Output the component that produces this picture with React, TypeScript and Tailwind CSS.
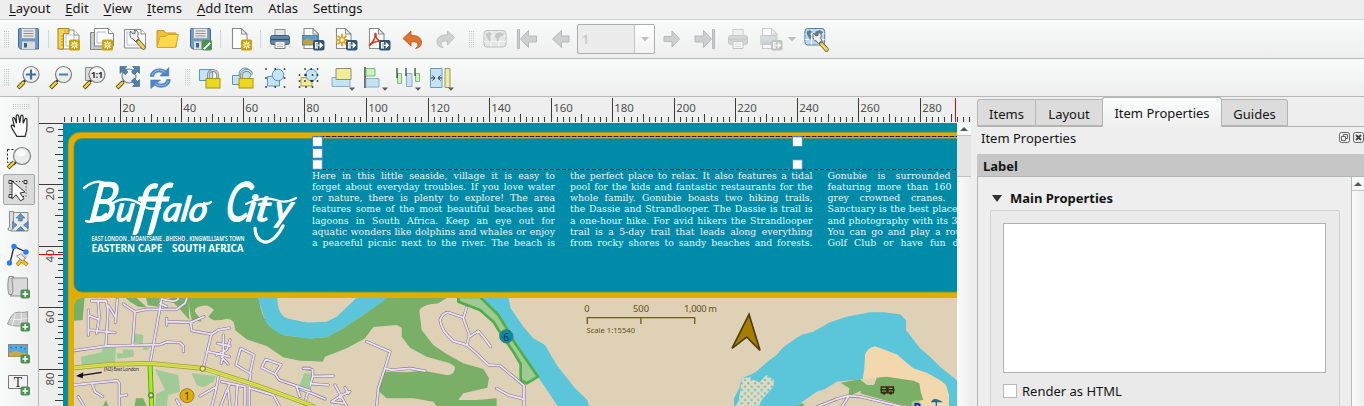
import type { ReactNode } from "react";

const UI = "font-['Noto_Sans',sans-serif]";

/* ---------- shared pieces ---------- */

function Icon({ children, size = 24 }: { children: ReactNode; size?: number }) {
  return (
    <svg width={size} height={size} viewBox={`0 0 ${size} ${size}`} className="block shrink-0 overflow-visible">
      {children}
    </svg>
  );
}

function Cell({ children, w = "w-[33px]" }: { children?: ReactNode; w?: string }) {
  return <div className={`${w} flex h-full shrink-0 items-center justify-center`}>{children}</div>;
}

function Sep({ w = "w-[7px]" }: { w?: string }) {
  return (
    <div className={`${w} flex h-full shrink-0 items-center justify-center`}>
      <div className="h-[18px] w-px bg-[#d6d6d6]" />
    </div>
  );
}

function Grip({ w = "w-[12px]", horizontal = false }: { w?: string; horizontal?: boolean }) {
  const dots: ReactNode[] = [];
  for (let i = 0; i < 3; i++) {
    for (let j = 0; j < 8; j++) {
      const a = i * 2;
      const b = j * 2.2;
      dots.push(
        <rect key={`${i}-${j}`} x={horizontal ? b : a} y={horizontal ? a : b} width="1" height="1" fill="#c2c5c5" />
      );
    }
  }
  return (
    <div className={`${w} flex shrink-0 items-center justify-center`}>
      <svg width={horizontal ? 17 : 5} height={horizontal ? 5 : 17} className="block">
        {dots}
      </svg>
    </div>
  );
}

/* ---------- icon parts ---------- */

const Star = () => (
  <g>
    <rect x="12" y="12.500" width="11" height="11" rx="1.500" fill="#c8a30c" />
    <path d="M17.5 14v8M13.500 18h8M14.700 15.200l5.600 5.600M20.300 15.200l-5.600 5.600" stroke="#fff" strokeWidth="1.200" />
    <circle cx="17.500" cy="18" r="1.500" fill="#e6c843" />
  </g>
);
const ExportBadge = ({ c = "#36566f" }: { c?: string }) => (
  <g>
    <rect x="12" y="13" width="11.500" height="10.500" rx="2" fill={c} />
    <path d="M17 15.500h-2.500v5.500H17M16.500 18.200h4.500M19.200 16v4.500l2.300-2.300z" stroke="#fff" strokeWidth="1.100" fill="#fff" fillOpacity=".6" />
  </g>
);
const PlusBadge = () => (
  <g>
    <rect x="13.500" y="14.500" width="9.500" height="9" rx="1.800" fill="#4f9154" />
    <path d="M18.200 16.200v5.600M15.500 19h5.600" stroke="#fff" strokeWidth="1.700" />
  </g>
);
const Page = () => <path d="M3.500 1.500h9l5.500 5.500v14.500H3.500zM12.500 1.500V7H18" fill="#fff" stroke="#8a8a88" strokeWidth="1.100" />;
const Floppy = () => (
  <g>
    <path d="M1.500 2.500a1 1 0 011-1h18a1 1 0 011 1V22h-18l-2-2z" fill="#6f9bc4" stroke="#44698e" />
    <rect x="4.500" y="1.500" width="14" height="10" fill="#e9e9e9" stroke="#8798a8" strokeWidth=".7" />
    <path d="M6.500 4h10M6.500 6.500h10M6.500 9h10" stroke="#8d8d8d" />
    <rect x="5" y="14.500" width="13" height="7.500" fill="#dcdcdc" />
    <rect x="7" y="16" width="3" height="4.500" fill="#3f6386" />
  </g>
);
const Lens = ({ x = 14, y = 8.500, r = 8 }: { x?: number; y?: number; r?: number }) => (
  <g>
    <path d={`M${x - r * 0.7} ${y + r * 0.7}L${x - r * 0.7 - 2.500} ${y + r * 0.7 + 2.500}`} stroke="#333" strokeWidth="2.500" />
    <path d="M7 16L1 22" stroke="#5c4a10" strokeWidth="4" />
    <path d="M7 16L1.500 21.500" stroke="#f2d638" strokeWidth="2.400" />
    <circle cx={x} cy={y} r={r} fill="#e9ebeb" fillOpacity=".92" stroke="#7e8080" strokeWidth="1.200" />
    <ellipse cx={x - 1} cy={y - 3} rx={r * 0.6} ry={r * 0.4} fill="#fff" opacity=".7" />
  </g>
);
const Caret = ({ x = 20, y = 21.500 }: { x?: number; y?: number }) => <path d={`M${x - 3} ${y}h6l-3 3.200z`} fill="#5a5a5a" />;
const Wrench = () => (
  <g>
    <path d="M13 12l7.500 8.500" stroke="#6d6540" strokeWidth="4.600" strokeLinecap="round" />
    <path d="M15.500 15l5 5.500" stroke="#f0d55a" strokeWidth="2.800" strokeLinecap="round" />
    <path d="M7 6.500c0-1 .2-1.700.8-2.300L10 7l2-.7.2-2.300-1-1c4 .4 4.800 4 3.300 6.200L16 11.500l-3.500 3-2.300-2.500C8 12 6.800 9.500 7 6.500z" fill="#f2f2f2" stroke="#646464" />
  </g>
);
const Printer = ({ off = false }: { off?: boolean }) => (
  <g opacity={off ? 0.4 : 1}>
    <rect x="7" y="2.500" width="10" height="8" fill="#e8e8e8" stroke="#8b8f92" />
    <rect x="2.500" y="8.500" width="19" height="9" rx="2" fill={off ? "#a6a9aa" : "#5f88aa"} stroke={off ? "#888" : "#3d5e7c"} />
    <path d="M3 12.500h18" stroke={off ? "#888" : "#39536a"} strokeWidth="1.400" />
    <path d="M7 14.500h10v7H7z" fill="#fff" stroke="#7d8082" />
    <path d="M9 17h6M9 19.500h6" stroke="#aaa" />
  </g>
);
const Picture = () => (
  <g>
    <rect x="2" y="8.500" width="15.500" height="9.500" fill="#4da3d8" stroke="#5b6e74" strokeWidth=".8" />
    <path d="M2.500 17.500v-4l5-2.500 4 3 3-2 2.500 1.500v4z" fill="#c3a23a" />
  </g>
);
const MapTile = ({ off = false }: { off?: boolean }) => (
  <g opacity={off ? 0.55 : 1}>
    <rect x="1" y="3.500" width="22" height="16.500" rx="3" fill={off ? "#dadddd" : "#b9d8ee"} stroke={off ? "#8f8f8f" : "#54788f"} />
    <path d="M1 9h22M1 14.500h22M8 4v16M16 4v16" stroke="#fff" strokeWidth=".9" />
    <path d="M3 6.500l4-1.500 2 2-2 2 1 2.500-1 4-2-3.500-2-3zM13 6.500l4-1.500 4 2-2 3-2-1-1 4-2 2-.5-3.500-2-2z" fill={off ? "#a0a0a0" : "#56809d"} />
  </g>
);
const Dots = ({ x, y, w, h }: { x: number; y: number; w: number; h: number }) => (
  <path
    d={`M${x} ${y}h.01M${x + w / 2} ${y}h.01M${x + w} ${y}h.01M${x} ${y + h / 2}h.01M${x + w} ${y + h / 2}h.01M${x} ${y + h}h.01M${x + w / 2} ${y + h}h.01M${x + w} ${y + h}h.01`}
    stroke="#111"
    strokeWidth="1.500"
    strokeLinecap="square"
  />
);
const Lock = ({ open = false }: { open?: boolean }) => (
  <g>
    <path d={open ? "M10.500 12V9c0-6 10-6 10-.5" : "M10.500 13V9c0-6 9-6 9 0v4"} fill="none" stroke="#858888" strokeWidth="3" />
    <path d={open ? "M10.500 12V9c0-6 10-6 10-.5" : "M10.500 13V9c0-6 9-6 9 0v4"} fill="none" stroke="#d5d7d7" strokeWidth="1.200" />
    <rect x="8" y="12.500" width="14" height="9.500" fill="#edd81f" stroke="#aa9210" />
  </g>
);

/* ---------- toolbars ---------- */

function MainToolbar() {
  return (
    <div className="flex h-[39px] shrink-0 items-center border-b border-[#b7b8b8] bg-linear-to-b from-[#f9fbfb] to-[#eeeeee]">
      <Grip />
      <Cell><Icon><Floppy /></Icon></Cell>
      <Sep />
      <Cell>
        <Icon>
          <path d="M3 3h14l5 5v14H3z" fill="#fff" stroke="#8a8a88" />
          <path d="M17 3v5h5" fill="#fff" stroke="#8a8a88" />
          <rect x="9" y="8" width="8" height="11" fill="none" stroke="#a9bfe4" />
          <path d="M1 1.500h11v5H6.500V22H1z" fill="#f3d550" stroke="#a2851f" />
          <path d="M4 9h2M4 12h2M4 15h2M4 18h2M8 3v2M11 3v2" stroke="#a2851f" strokeWidth=".8" />
          <Star />
        </Icon>
      </Cell>
      <Cell>
        <Icon>
          <path d="M.5 5.500h16v17H.5z" fill="#c9c9c9" stroke="#858585" />
          <path d="M4.500 1.500h14l5 5V19h-19z" fill="#fff" stroke="#858585" />
          <path d="M18.500 1.500v5h5" fill="#fff" stroke="#858585" />
          <path d="M7 5h9M7 5v11h12" fill="none" stroke="#a9bfe4" />
          <Star />
        </Icon>
      </Cell>
      <Cell>
        <Icon>
          <path d="M1.500 2.500H18l4.500 4.500v14h-21z" fill="#fff" stroke="#8a8a88" />
          <path d="M18 2.500V7h4.500" fill="#fff" stroke="#8a8a88" />
          <path d="M4 5h10M4 5v13h13" fill="none" stroke="#a9bfe4" />
          <Wrench />
        </Icon>
      </Cell>
      <Cell>
        <Icon>
          <path d="M1 3.500h7l1.500 2.500H20v14H1z" fill="#edc23a" stroke="#c7961c" />
          <path d="M1 20.500L4 9.500h6l2-2h10.500l-3 13z" fill="#fbd84e" stroke="#d6a827" />
        </Icon>
      </Cell>
      <Cell>
        <Icon>
          <Floppy />
          <rect x="12.500" y="13" width="10.500" height="10.500" rx="1.800" fill="#4f9154" />
          <path d="M14.500 21.500l6-6 1 1-6 6z" fill="#fff" stroke="#d6f0d4" />
        </Icon>
      </Cell>
      <Sep />
      <Cell w="w-[34px]"><Icon><Page /><Star /></Icon></Cell>
      <Sep w="w-[5px]" />
      <Cell><Icon><Printer /></Icon></Cell>
      <Cell><Icon><g transform="translate(-.5 0)"><Page /><Picture /></g><ExportBadge /></Icon></Cell>
      <Cell>
        <Icon>
          <g transform="translate(-1 0)">
            <Page />
            <path d="M9 7.500v11M3.800 13h10.500M5.300 9.300l7.400 7.400M12.700 9.300l-7.400 7.400" stroke="#eba21c" strokeWidth="2" strokeLinecap="round" />
            <circle cx="9" cy="13" r="1.800" fill="#fff" />
          </g>
          <ExportBadge />
        </Icon>
      </Cell>
      <Cell>
        <Icon>
          <g transform="translate(-1 0)">
            <Page />
            <path d="M3.500 18C7 15 9.500 10.500 9 7.500c-.2-1.500 1.500-1 1 0-.7 3 1.500 6 5 7-3-.4-8 .5-11 3.800z" fill="none" stroke="#d53b24" strokeWidth="1.500" />
          </g>
          <ExportBadge />
        </Icon>
      </Cell>
      <Cell>
        <Icon>
          <path d="M3 11.500L11 4v4.500c6.500-.6 10.500 2.500 10.500 7 0 3.500-2.500 5.500-6 6 2.300-1.500 3-3.200 2-5-1-1.500-3.300-2-6.500-1.700V19z" fill="#df7430" stroke="#b85719" strokeWidth=".8" />
        </Icon>
      </Cell>
      <Cell>
        <Icon>
          <path d="M21.500 10.500L14.500 4v4c-6.500-.5-10.500 2.500-10.500 6.500 0 3.500 2 5.500 6 6-2-1.800-2.500-3.500-1.500-5 1-1.300 3-1.700 6-1.500v4z" fill="#cfd2d1" stroke="#b4b7b6" strokeWidth=".8" />
        </Icon>
      </Cell>
      <Grip w="w-[17px] pl-1" />
      <Cell><Icon><MapTile off /></Icon></Cell>
      <Cell>
        <Icon><path d="M1.500 2.500h2v19h-2zM4.500 12l8-8.500v5.500h8v6h-8v5.500z" fill="#ccd0d1" stroke="#b5b9ba" /></Icon>
      </Cell>
      <Cell>
        <Icon><path d="M3.500 12l9-8.500v5.500H20v6h-7.500v5.500z" fill="#ccd0d1" stroke="#b5b9ba" /></Icon>
      </Cell>
      <div className="flex h-[30px] w-[78px] shrink-0 items-stretch overflow-hidden rounded-[2px] border border-[#adadad] bg-[#ececec]">
        <div className="flex flex-1 items-center pl-1 text-[13px] text-[#b9bcbd]">1</div>
        <div className="flex w-5 items-center justify-center border-l border-[#c2c2c2] bg-linear-to-b from-white to-[#f3f3f3]">
          <svg width="8" height="5"><path d="M0 0h8L4 4.500z" fill="#bdbfbf" /></svg>
        </div>
      </div>
      <Cell>
        <Icon><path d="M19.500 12l-7.500-8v5.500H4v5h8V20z" fill="#ccd0d1" stroke="#b5b9ba" /></Icon>
      </Cell>
      <Cell>
        <Icon><path d="M21.500 2.500h-2v19h2zM18.500 12l-8-8.500v5.500H2v6h8.500v5.500z" fill="#ccd0d1" stroke="#b5b9ba" /></Icon>
      </Cell>
      <Cell><Icon><Printer off /></Icon></Cell>
      <Cell>
        <Icon>
          <g opacity=".38">
            <Page />
            <rect x="2" y="8.500" width="15" height="9" fill="#a3bab9" stroke="#777" />
            <rect x="2" y="14" width="15" height="3.500" fill="#999" />
            <ExportBadge c="#777" />
          </g>
        </Icon>
      </Cell>
      <Cell w="w-[10px]"><svg width="8" height="5"><path d="M0 0h8L4 4.500z" fill="#bdbfbf" /></svg></Cell>
      <Cell w="w-[38px]">
        <Icon>
          <g transform="translate(0 -2) scale(.9 1)"><MapTile /></g>
          <g transform="translate(2 2)"><Wrench /></g>
        </Icon>
      </Cell>
    </div>
  );
}

function ViewToolbar() {
  return (
    <div className="flex h-[38px] shrink-0 items-center border-b border-[#b7b8b8] bg-linear-to-b from-[#f9fbfb] to-[#eeeeee]">
      <Grip />
      <Cell><Icon><Lens /><path d="M14 3.500v10M9 8.500h10" stroke="#426f9d" strokeWidth="2.200" /></Icon></Cell>
      <Cell><Icon><g transform="translate(-.5 0)"><Lens /><path d="M9.500 8.500h9" stroke="#5783ad" strokeWidth="2.200" /></g></Icon></Cell>
      <Cell>
        <Icon>
          <path d="M2.500 1.500h14v13h-14z" fill="#dcdcdc" stroke="#8d8d8d" />
          <Lens />
          <text x="13.700" y="12" textAnchor="middle" fontFamily="Open Sans, sans-serif" fontSize="9.500" fontWeight="700" fill="#333" letterSpacing="-.5">1:1</text>
        </Icon>
      </Cell>
      <Cell>
        <Icon>
          <Lens x={13} y={10} r={7} />
          <path d="M4 .5h7L8.800 2.700l3.200 3.200-2.800 2.800L6 5.500 4 7.500zM23.500.5v7l-2-2-3.300 3.200-2.800-2.800 3.200-3.200L16.500.5zM23.500 20.500h-7l2.200-2.200-3.300-3.300 2.800-2.800 3.300 3.300 2-2z" fill="#5180ac" stroke="#315a80" strokeWidth=".6" />
        </Icon>
      </Cell>
      <Cell>
        <Icon>
          <g transform="translate(-.7 0)">
            <path d="M2 10.500C2 3 12 .5 17.500 4.800L20.500 1.500v8.500h-9l3-3C10.500 5 6 6.500 5.500 10.500z" fill="#4f87c5" stroke="#3a6eaa" strokeWidth=".5" />
            <path d="M22 13.500C22 21 12 23.500 6.500 19.200L2.500 22.500V14h9.500l-3 3c4 2 9 .5 9.500-3.500z" fill="#4f87c5" stroke="#3a6eaa" strokeWidth=".5" />
            <path d="M4 9C6 4 12 2.500 17 6.500M20 15C18 20 12 21 7 17.800" stroke="#9fc3e8" fill="none" />
          </g>
        </Icon>
      </Cell>
      <Grip w="w-[16px] pl-1" />
      <Cell><Icon><path d="M1.500 3.500h13v11h-13z" fill="#c4e4f6" stroke="#5d96ba" /><Lock /></Icon></Cell>
      <Cell>
        <Icon>
          <path d="M1.500 9.500h12v9h-12z" fill="#c4e4f6" stroke="#5d96ba" />
          <circle cx="14" cy="8" r="6" fill="#c4e4f6" stroke="#5d96ba" />
          <Lock open />
        </Icon>
      </Cell>
      <Cell>
        <Icon>
          <path d="M3.500 10.500h12v9.500h-12z" fill="#c4e4f6" stroke="#5d96ba" />
          <circle cx="14" cy="9" r="5.800" fill="#c4e4f6" stroke="#5d96ba" />
          <Dots x={2} y={3} w={18.500} h={18} />
        </Icon>
      </Cell>
      <Cell>
        <Icon>
          <path d="M4 11.500h11v8.500H4z" fill="#f1eb97" stroke="#aaa04a" />
          <circle cx="14.500" cy="9" r="5.800" fill="#c4e4f6" stroke="#5d96ba" />
          <Dots x={8} y={3} w={12.500} h={12} />
          <Dots x={2.500} y={9} w={13} h={12} />
        </Icon>
      </Cell>
      <Cell>
        <Icon>
          <path d="M2 11.500h18v9H2z" fill="#c4e4f6" stroke="#8cadc2" />
          <path d="M6 2.500h15v11H6z" fill="#f1eb9c" stroke="#8f8c70" />
          <Caret x={22} />
        </Icon>
      </Cell>
      <Cell>
        <Icon>
          <path d="M2 1v21" stroke="#111" strokeWidth="1.200" />
          <path d="M3 2.500h9v7.500H3z" fill="#c8f2bf" stroke="#80b978" />
          <path d="M3 12.500h13v8.500H3z" fill="#c4e4f6" stroke="#8cadc2" />
          <Caret x={22} />
        </Icon>
      </Cell>
      <Cell>
        <Icon>
          <path d="M1.500 7.500h4v10h-4z" fill="#c8f2bf" stroke="#80b978" />
          <path d="M10.500 7.500h5.500v13h-5.500z" fill="#c4e4f6" stroke="#8cadc2" />
          <path d="M19.500 7.500h4v8h-4z" fill="#c8f2bf" stroke="#80b978" />
          <path d="M1 2v10M10 2v8M19 2v8" stroke="#111" />
          <Caret x={22} />
        </Icon>
      </Cell>
      <Cell>
        <Icon>
          <path d="M1.500 2.500h11.500v19H1.500z" fill="#c4e4f6" stroke="#6a9ab9" />
          <path d="M16 2.500h5v19h-5z" fill="#f1eb9c" stroke="#99966e" />
          <path d="M2 12h4M3.500 9.500L6 12l-2.500 2.500M13 12H9M11.500 9.500L9 12l2.500 2.500" stroke="#333" fill="none" />
          <Caret x={22} />
        </Icon>
      </Cell>
    </div>
  );
}

function ToolCell({ children, active = false }: { children: ReactNode; active?: boolean }) {
  return (
    <div className="flex h-[32.400px] shrink-0 items-center justify-center">
      <div
        className={
          active
            ? "flex h-[31px] w-[32px] items-center justify-center rounded-[2px] border border-[#a9a9a9] bg-[#dadada]"
            : "flex h-[31px] w-[32px] items-center justify-center"
        }
      >
        <Icon>{children}</Icon>
      </div>
    </div>
  );
}

function SideToolbar() {
  return (
    <div className="flex w-[39px] shrink-0 flex-col overflow-hidden border-r border-[#b7b8b8] bg-linear-to-r from-[#f9fbfb] to-[#eeeeee]">
      <div className="flex h-[12px] shrink-0 items-end justify-center pl-1"><Grip w="w-5" horizontal /></div>
      <ToolCell>
        <g transform="translate(2.200 .8)">
          <path d="M7.500 22.500c-1-3-5-7-5.500-10 0-2 2-1.500 3.500 1L3.500 5.500c-.3-2 1.800-2.300 2.200-.5L7.300 9.500 7 2.500c0-2 2.300-2 2.500 0l1.100 6.500L11.500 2.500c.3-1.700 2.400-1.500 2.300.4L14 9.500l1.700-4c.8-1.500 2.500-.8 2 .8C17.500 10.500 19 14 16 22.500z" fill="#fff" stroke="#2b2b2b" strokeWidth="1.200" />
        </g>
      </ToolCell>
      <ToolCell>
        <path d="M.5 3.500h8M.5 3.500v13h17" fill="none" stroke="#111" strokeDasharray="2 2" />
        <Lens x={15} y={10} r={8.500} />
      </ToolCell>
      <ToolCell active>
        <rect x="3" y="3.500" width="16" height="15" fill="none" stroke="#333" strokeDasharray="1 2" />
        <path d="M2 2.500h3v3H2zM17 2.500h3v3h-3zM2 16.500h3v3H2z" fill="#eee" stroke="#333" />
        <path d="M5 3v18l4-4.200 4.500 6 3.500-2-4-5.800 5-1z" fill="#fff" stroke="#333" />
      </ToolCell>
      <ToolCell>
        <path d="M2.500 1.500h4v19h-4a1.500 1.500 0 010-3z" fill="#ddd" stroke="#888" />
        <path d="M6.500 2.500h14.500v18.500H3.500l3-3z" fill="#e9e9e9" stroke="#888" />
        <path d="M13.500 3.500l4.200 4.500h-2.500v3h-3.500V8H9.300z" fill="#6797c0" stroke="#416b90" strokeWidth=".7" />
        <path d="M5.500 11.500l4.500 3.500-4.500 3.500zM21 11.500l-4.500 3.500 4.500 3.500zM9.500 20.500l4-4 4 4z" fill="#6797c0" stroke="#416b90" strokeWidth=".7" />
      </ToolCell>
      <ToolCell>
        <path d="M3 20L7 3.500 19 9" fill="none" stroke="#222" strokeWidth="1.300" />
        <path d="M10 22l8-9M14 17l6.500 5" stroke="#a77b18" strokeWidth="3.800" />
        <path d="M10 22l8-9M14 17l6 5" stroke="#f1c232" strokeWidth="2.300" />
        <path d="M9.500 13l4-2 5 4-3 3z" fill="#eee" stroke="#777" strokeWidth=".8" />
        <path d="M14 9.500l6 4.500" stroke="#d5d5d5" strokeWidth="2.600" />
        <circle cx="7" cy="3.500" r="2.700" fill="#2a7df0" />
        <circle cx="19" cy="9" r="2.700" fill="#2a7df0" />
        <circle cx="2.500" cy="20" r="2.700" fill="#2a7df0" />
      </ToolCell>
      <ToolCell>
        <path d="M2 1.500h4.500v18H2c-1.500-4-1.500-13 0-18z" fill="#d2d2d2" stroke="#8a8a8a" />
        <path d="M5 3h15.500v18H3c3-1 3.500-4 2-18z" fill="#dadada" stroke="#8a8a8a" />
        <PlusBadge />
      </ToolCell>
      <ToolCell>
        <path d="M.5 16C3 10 5 6 9 4.500c4-1 7 1 11.500-1V16c-5 2.500-12 3-20 0z" fill="#cdcdcd" stroke="#9a9a9a" />
        <path d="M4 10.500c5 2 11 1 16.500-.5M8 5c0 4-2 9-3 13M14 4.500c1 5 0 9-1 13" fill="none" stroke="#eee" />
        <PlusBadge />
      </ToolCell>
      <ToolCell>
        <rect x="1.500" y="4.500" width="19" height="12" fill="#4fabe0" stroke="#888" />
        <path d="M4 7.500h.1M9 7.500h.1M14 7.500h.1M18 9h.1" stroke="#27658f" strokeWidth="1.500" strokeLinecap="round" />
        <path d="M2 16.500V13l7-2.500 5 2 6 1v3z" fill="#c9a949" />
        <PlusBadge />
      </ToolCell>
      <ToolCell>
        <path d="M1.500 3.500h19v13h-19z" fill="#f3f3f3" stroke="#777" />
        <text x="11" y="14.500" textAnchor="middle" fontFamily="DejaVu Serif, serif" fontSize="12.500" fill="#333">T</text>
        <PlusBadge />
      </ToolCell>
      <ToolCell><path d="M2 7l2-4.500 3 1 1 4.500z" fill="#e8b92c" /></ToolCell>
    </div>
  );
}

/* ---------- rulers ---------- */

const UNIT = 3.077;

function TopRuler() {
  const ticks: ReactNode[] = [];
  const origin = 58.8 - 39;
  for (let v = 2; v <= 296; v += 2) {
    const x = Math.floor(origin + v * UNIT) + 0.5;
    const top = v % 20 === 0 ? 1 : v % 10 === 0 ? 17 : 20;
    ticks.push(<path key={v} d={`M${x} ${top}V25`} stroke="#3a3a3a" />);
    if (v % 20 === 0 && v < 290) {
      ticks.push(
        <text key={`t${v}`} x={x + 1.7} y="15" fontSize="11.400" fill="#505050">{v}</text>
      );
    }
  }
  return (
    <svg width="932" height="26" className="block shrink-0 font-['Noto_Sans',sans-serif]">
      <rect width="932" height="26" fill="#eeeeee" />
      {ticks}
      <path d="M916.500 1V25" stroke="#f00000" />
    </svg>
  );
}

function LeftRuler() {
  const ticks: ReactNode[] = [];
  for (let v = 0; v <= 90; v += 2) {
    const y = Math.floor(0.3 + v * UNIT) + 0.5;
    const left = v % 20 === 0 ? 0 : v % 10 === 0 ? 16 : 19;
    ticks.push(<path key={v} d={`M${left} ${y}H24`} stroke="#3a3a3a" />);
    if (v % 20 === 0) {
      ticks.push(
        <text key={`t${v}`} transform={`translate(14.500 ${y + 3}) rotate(-90)`} textAnchor="end" fontSize="11.400" fill="#505050">{v}</text>
      );
    }
  }
  return (
    <svg width="24" height="283" className="block shrink-0 font-['Noto_Sans',sans-serif]">
      <rect width="24" height="283" fill="#eeeeee" />
      {ticks}
      <path d="M0 131.500H24" stroke="#f00000" />
    </svg>
  );
}

/* ---------- map artwork ---------- */

const WEST_ROADS = [
  "M275 183H318L324 210 318 315", "M352 178L346 248", "M326 198L346 230", "M294 185L298 230 290 280", "M265 210V262M265 226L296 238", "M265 265V285M265 270L345 278",
  "M370 192L405 215 440 208 530 208 555 190 560 176", "M405 215L398 312", "M485 175L470 260 450 370", "M480 190L500 200 M490 178Q530 190 535 175",
  "M222 332L320 318 480 314 500 306 540 308 550 318V335", "M500 235V255M500 245L572 247 612 230", "M572 247L575 272 635 283 655 270 688 264",
  "M634 284L612 375M625 335L688 350", "M670 285V340L664 370M652 310L690 318M690 300L680 330 650 345M684 372L664 350",
  "M722 325L762 345 750 400 708 375Z", "M797 358L843 374 825 402 785 383Z", "M752 400L748 430V498", "M825 402L838 420 930 452",
  "M222 435L352 422 358 430V498M275 430L285 455 308 470M358 468L380 465M235 470L252 498", "M655 408L650 440 600 468M650 440L636 498",
  "M665 425L735 440V498M690 430L675 465 662 498M712 435L708 498M752 445L820 465 838 498M910 385H930M890 440L900 470", "M530 480L540 498M685 450L690 498",
];
const EAST_ROADS = [
  "M200 170L270 200 255 250 235 310 230 363", "M255 250L275 255 330 250 375 258", "M500 67L490 100 508 150 500 182",
  "M490 98L445 82Q430 82 420 105 425 140 460 168L500 180 530 205 565 240 600 242 640 275 672 302V363", "M508 155L535 138 550 155 572 185", "M590 310L625 330 670 342",
  "M10 250L38 254V275L15 350M38 274L100 273M32 296L85 300M28 322L75 342M0 312L28 322", "M105 300L122 332 150 320M122 332L95 350 130 355M122 332L140 363M135 308L145 325",
];

function Roads({ d }: { d: string[] }) {
  const all = d.join("");
  return (
    <g fill="none" strokeLinejoin="round" strokeLinecap="round">
      <path d={all} stroke="#85768d" strokeWidth="9" />
      <path d={all} stroke="#ebe0f6" strokeWidth="5.500" />
    </g>
  );
}

function Artwork() {
  return (
    <svg width="894" height="283" viewBox="63 123 894 283" className="block font-['Noto_Sans',sans-serif]">
      <defs>
        <clipPath id="mapArea"><path d="M74 406V306a8 8 0 018-8H960V406z" /></clipPath>
        <pattern id="marsh" width="20" height="20" patternUnits="userSpaceOnUse">
          <rect width="20" height="20" fill="#e3dabc" />
          <circle cx="5" cy="5" r="3.400" fill="#5bc5d9" />
          <circle cx="15" cy="15" r="3.400" fill="#5bc5d9" />
        </pattern>
      </defs>
      <rect x="63" y="123" width="894" height="283" fill="#008ca8" />
      <path d="M68 420V144a12 12 0 0112-12H960V420z" fill="#e2ad00" />
      <path d="M960 138.500H82a8 8 0 00-8 8V284a8 8 0 008 8H960z" fill="#008ca8" />
      <path d="M960 132.200H80a12 12 0 00-12 12V406M960 138.500H82a8 8 0 00-8 8V284a8 8 0 008 8H960" fill="none" stroke="#6b8d45" strokeWidth=".8" />

      <g clipPath="url(#mapArea)">
        <rect x="70" y="298" width="890" height="108" fill="#dfd1b6" />

        {/* east side: river, green belt, reserve */}
        <g transform="translate(300 285) scale(.33333)">
          <path d="M0 113L80 110 110 95 170 38H268L190 90 130 130 80 157 0 162Z" fill="#5bc5d9" />
          <path d="M-10 163L80 157 130 130 190 90 265 38H442L415 55Q362 60 358 78L365 135 400 180 440 207 490 235 550 252 567 280 562 308 490 325 475 345 530 345 590 340V363H410L400 350 340 340 260 340 238 320 240 290 255 260 320 262 370 257 440 270Q465 272 465 245L450 235 380 215 330 188 305 155V128L290 120 220 126 195 160 140 190 75 215 68 230 -10 225Z" fill="#79af66" />
          <path d="M548 38H625L632 70 670 125 700 160 735 180 770 240 825 310 862 345 868 366H775L717 280 650 180 600 95Z" fill="#5bc5d9" />
          <path d="M475 36V50L540 75 580 110 605 150 640 200 662 237V285L680 295 714 275 645 175 620 130 595 90 540 36Z" fill="#9fca91" stroke="#4daf49" strokeWidth="8" strokeLinejoin="round" />
          <path d="M15 265L35 265 25 310 -5 306Z" fill="#a0cb96" />
          <Roads d={EAST_ROADS} />
          <path d="M0 350L45 366" stroke="#9b9a2a" strokeWidth="12" />
          <path d="M0 350L45 366" stroke="#dbe34f" strokeWidth="8" />
          <circle cx="619" cy="154" r="20" fill="#008ca8" stroke="#5a6f73" strokeWidth="3" />
        </g>

        {/* west side: suburbs */}
        <g transform="translate(0 240) scale(.33333)">
          <path d="M222 172H254L248 240 222 242Z M375 172L390 185 415 200 440 202 408 172Z M438 172L443 195 475 200 480 172Z M505 172H565L568 240 540 208 Z" fill="#79af66" />
          <path d="M562 172H775Q785 235 810 260L850 285 940 298V362L900 362 850 352 800 318 740 298 705 270Q705 235 680 236 640 248 625 230L642 210Q625 192 605 198 570 205 595 228L605 245 575 240Z" fill="#79af66" />
          <path d="M773 172H832Q832 222 860 235L940 252V298L850 285Q800 265 790 225Z" fill="#5bc5d9" />
          <path d="M243 350L305 337 308 322H348L345 365 245 374ZM350 340H370L366 328 400 330 402 350 352 356ZM402 280L430 285 428 312 400 308ZM465 388L535 405 540 455 505 465 500 500H465L468 462 495 450ZM575 400L648 408 640 425 610 442 590 435ZM912 398L930 405V447L900 440ZM430 322H446V330H430Z" fill="#a0cb96" />
          <path d="M403 500L408 475H430L440 500ZM308 500L318 480 326 500Z" fill="#79af66" />
          <Roads d={WEST_ROADS} />
          <g fill="none">
            <path d="M450 372L455 500" stroke="#5e961c" strokeWidth="15" />
            <path d="M450 372L455 500" stroke="#a1f01c" strokeWidth="10" />
            <path d="M218 384L330 373 450 370 610 385 760 433 935 496" stroke="#9a9a32" strokeWidth="14" />
            <path d="M218 384L330 373 450 370 610 385 760 433 935 496" stroke="#dce653" strokeWidth="10" />
            <path d="M218 384L330 373 450 370 610 385 760 433 935 496" stroke="#aeb43c" strokeWidth="1.500" />
          </g>
          <circle cx="608" cy="386" r="8" fill="#dce653" stroke="#77771e" strokeWidth="3" />
          <circle cx="608" cy="386" r="3" fill="#eee" />
          <circle cx="453" cy="466" r="8" fill="#8fc741" stroke="#55791e" strokeWidth="3" />
          <circle cx="453" cy="466" r="3" fill="#fff" />
          <path d="M305 397L245 406" stroke="#111" strokeWidth="4" />
          <path d="M228 408L250 397 248 415Z" fill="#111" />
          <circle cx="561" cy="467" r="21" fill="#e2ad00" stroke="#8d7c4d" strokeWidth="3" />
        </g>

        {/* estuary */}
        <g transform="translate(630 285) scale(.33333)">
          <path d="M375 263L410 232 440 210 458 188 500 158 520 148 550 140 600 112 650 95 720 82 760 82 810 88 828 105V135L870 190 900 215 930 245 990 294V366H480L560 320 590 312 620 290 650 287 500 366H312V340L328 310 335 280Z" fill="#5bc5d9" />
          <path d="M495 366L560 320 585 312 620 290 650 287 700 283 850 366Z" fill="#dfd1b6" />
          <path d="M735 184Q710 190 705 210L703 250 697 290 800 366H957L957 330 948 300 930 285 890 263 850 250 820 225 800 208Z" fill="#f3d7ad" />
          <path d="M632 293L690 283 712 300 732 300 740 278 770 275 850 287 868 295 872 320 880 345 850 350 848 366 800 356 690 325 692 318 655 335 658 310Z" fill="#79af66" />
          <path d="M690 283L705 283 735 280 732 300 712 300ZM660 332L692 318V330Z" fill="#dfd1b6" />
          <path d="M335 280L362 275 388 288 410 270 432 285 430 305 395 345 385 366H315L325 350 332 310Z" fill="url(#marsh)" />
          <path d="M375 265L365 278 388 288 405 268" fill="none" stroke="#5bc5d9" strokeWidth="7" />
          <path d="M492 366L515 354 525 360 505 366Z" fill="#79af66" />
          <path d="M845 350L865 345 878 366H845Z" fill="#a0cb96" />
          <Roads d={["M560 366L620 342 655 332 690 335 820 366", "M655 335L635 366"]} />
          <g fill="none" stroke="#3a2a0c" strokeWidth="4.500">
            <path d="M754 306h16v17h-16zM774 306h16v17h-16zM751 314H794" />
            <circle cx="762" cy="324" r="3" /><circle cx="782" cy="324" r="3" />
          </g>
          <path d="M906 350Q912 338 932 350ZM919 345V362" fill="#15748b" stroke="#15748b" strokeWidth="4" />
          <path d="M357 88L306 190 350 156 390 196Z" fill="#a67d00" stroke="#4e3e08" strokeWidth="5" />
        </g>
      </g>

      <text x="506.300" y="340.500" textAnchor="middle" fontSize="10.500" fill="#1e3438">6</text>
      <text x="187" y="399.800" textAnchor="middle" fontSize="10.500" fill="#3a3210">1</text>
      <text x="104" y="370.500" fontSize="4.800" fill="#333" textLength="35">(N2) East London</text>
      <text x="917.300" y="412" textAnchor="middle" fontSize="12" fontWeight="700" fill="#1414b4">P</text>

      <path d="M587.300 324V317.700H694.700V324M640.900 317.700V324" fill="none" stroke="#6b5b1d" strokeWidth="1.300" />
      <g fill="#5f501b">
        <text x="587" y="312" textAnchor="middle" fontSize="9.300">0</text>
        <text x="641" y="312" textAnchor="middle" fontSize="9.300">500</text>
        <text x="684" y="312" fontSize="9.300" textLength="33">1,000 m</text>
        <text x="586.500" y="332.800" fontSize="7.800" textLength="48.500" lengthAdjust="spacingAndGlyphs">Scale 1:15540</text>
      </g>

      {/* city wordmark */}
      <g fill="#fff">
        <g
          fontFamily="Lato, sans-serif"
          fontStyle="italic"
          fontWeight="400"
          stroke="#fff"
          strokeWidth="1.300"
          strokeLinejoin="round"
          transform="translate(0 221) skewX(-9)"
        >
          <text x="88" y="0" fontSize="54" textLength="27" lengthAdjust="spacingAndGlyphs">B</text>
          <text x="115" y="0" fontSize="34" textLength="18" lengthAdjust="spacingAndGlyphs">u</text>
          <text x="133" y="6" fontSize="60" textLength="32" lengthAdjust="spacingAndGlyphs">ff</text>
          <text x="162" y="0" fontSize="34" textLength="44" lengthAdjust="spacingAndGlyphs">alo</text>
          <text x="224" y="0" fontSize="54" textLength="24" lengthAdjust="spacingAndGlyphs">C</text>
          <text x="245" y="0" fontSize="36" textLength="24" lengthAdjust="spacingAndGlyphs">it</text>
          <text x="273" y="0" fontSize="36" textLength="18" lengthAdjust="spacingAndGlyphs">y</text>
        </g>
        <path d="M283 226Q274 243 264 242 255 239 255 228" fill="none" stroke="#fff" strokeWidth="3.200" strokeLinecap="round" />
        <path d="M86 221Q94 224 106 214M84 188Q96 178 106 184" fill="none" stroke="#fff" strokeWidth="2.600" strokeLinecap="round" />
        <path d="M113 203Q127 194 145 207 150 210 160 208M204 203Q208 205 211 202" fill="none" stroke="#fff" strokeWidth="2.400" strokeLinecap="round" />
        <path d="M246 204Q262 196 276 200 286 204 296 198" fill="none" stroke="#fff" strokeWidth="2.200" strokeLinecap="round" />
        <text x="91.500" y="240.500" fontFamily="Noto Sans, sans-serif" fontSize="6.800" fontWeight="600" textLength="153" lengthAdjust="spacingAndGlyphs">EAST LONDON . MDANTSANE . BHISHO . KINGWILLIAM'S TOWN</text>
        <g fontFamily="Noto Sans, sans-serif" fontSize="9.800" fontWeight="700">
          <text x="91.500" y="252.300" textLength="71" lengthAdjust="spacingAndGlyphs">EASTERN CAPE</text>
          <text x="172" y="252.300" textLength="71.500" lengthAdjust="spacingAndGlyphs">SOUTH AFRICA</text>
        </g>
      </g>

      {/* selected label item */}
      <path d="M960 136.500H312.500V169.500H960" fill="none" stroke="#3d86c6" />
      <path d="M960 136.500H312.500V169.500H960" fill="none" stroke="#5c0a2d" strokeDasharray="4 2" />
      <g fill="#fff" stroke="#3787c4" strokeWidth=".9">
        <rect x="312.500" y="136.800" width="9.800" height="9.600" />
        <rect x="312.500" y="148.500" width="9.800" height="9.600" />
        <rect x="312.500" y="159.800" width="9.800" height="9.400" />
        <rect x="792.500" y="136.800" width="9.800" height="9.600" />
        <rect x="792.500" y="159.800" width="9.800" height="9.400" />
      </g>
    </svg>
  );
}

const COL_A = [
  "Here in this little seaside, village it is easy to",
  "forget about everyday troubles. If you love water",
  "or nature, there is plenty to explore! The area",
  "features some of the most beautiful beaches and",
  "lagoons in South Africa. Keep an eye out for",
  "aquatic wonders like dolphins and whales or enjoy",
  "a peaceful picnic next to the river. The beach is",
];
const COL_B = [
  "the perfect place to relax. It also features a tidal",
  "pool for the kids and fantastic restaurants for the",
  "whole family. Gonubie boasts two hiking trails,",
  "the Dassie and Strandlooper. The Dassie is trail is",
  "a one-hour hike. For avid hikers the Strandlooper",
  "trail is a 5-day trail that leads along everything",
  "from rocky shores to sandy beaches and forests.",
];
const COL_C: [string, string][] = [
  ["Gonubie is surrounded", "w-[123px]"],
  ["featuring more than 160", "w-[124px]"],
  ["grey crowned cranes.", "w-[118px]"],
  ["Sanctuary is the best place", "w-[130px]"],
  ["and photography with its 3", "w-[130px]"],
  ["You can go and play a rou", "w-[134px]"],
  ["Golf Club or have fun d", "w-[131px]"],
];

const LINE = "block h-[11.250px] whitespace-nowrap [text-align-last:justify]";

function Blurb() {
  return (
    <div className="absolute top-[46.500px] left-[249px] flex gap-[15px] font-['DejaVu_Serif',serif] text-[9.350px] leading-[11.250px] text-[#e9f5f7]">
      <div className="w-[243px] shrink-0">{COL_A.map((t) => <span key={t} className={LINE}>{t}</span>)}</div>
      <div className="w-[242.500px] shrink-0">{COL_B.map((t) => <span key={t} className={LINE}>{t}</span>)}</div>
      <div className="w-[243px] shrink-0">{COL_C.map(([t, w]) => <span key={t} className={`${LINE} ${w}`}>{t}</span>)}</div>
    </div>
  );
}

function CanvasArea() {
  return (
    <div className="flex w-[938px] shrink-0 flex-col">
      <TopRuler />
      <div className="flex flex-1">
        <LeftRuler />
        <div className="relative w-[894px] shrink-0 overflow-hidden">
          <Artwork />
          <Blurb />
        </div>
        <div className="flex w-[14px] shrink-0 flex-col bg-linear-to-r from-[#fafbfb] to-[#eeeeee]">
          <div className="flex h-[12px] items-center justify-center bg-[#f9fafa]">
            <svg width="8" height="4"><path d="M0 4h8L4 0z" fill="#555" /></svg>
          </div>
          <div className="h-[42px] border-y border-[#c2c2c2] bg-[#e5e5e5]" />
        </div>
      </div>
    </div>
  );
}

/* ---------- properties panel ---------- */

function PropertiesPanel() {
  const tab = "flex h-[27px] items-center justify-center border border-[#b4b4b4] bg-[#dcdcdc] pt-[3px]";
  return (
    <div className="flex flex-1 flex-col">
      <div className="flex h-[30px] items-end border-b border-[#b4b4b4]">
        <div className={`${tab} w-[59px] rounded-tl-[3px]`}>Items</div>
        <div className={`${tab} w-[66px] border-x-0`}>Layout</div>
        <div className="-mb-px flex h-[30px] w-[120px] items-center justify-center rounded-t-[3px] border border-b-0 border-[#b4b4b4] bg-linear-to-b from-[#fbfcfc] to-[#efefef] pt-px">
          Item Properties
        </div>
        <div className={`${tab} w-[66px] rounded-tr-[3px] border-l-0`}>Guides</div>
      </div>
      <div className="flex h-[27px] items-center justify-between pl-1">
        <span className="-mt-1.5">Item Properties</span>
        <div className="-mt-[6px] flex gap-[3px]">
          <svg width="11" height="11" fill="none" stroke="#666">
            <rect x=".5" y=".5" width="10" height="10" rx="2" />
            <path d="M4.500 4V2.500h4v4H7M2.500 4.500h4v4h-4z" />
          </svg>
          <svg width="11" height="11" fill="none" stroke="#666">
            <rect x=".5" y=".5" width="10" height="10" rx="2" />
            <path d="M3 3l5 5M8 3L3 8" strokeWidth="1.800" stroke="#444" />
          </svg>
        </div>
      </div>
      <div className="flex h-[23px] items-center border-b border-[#b4b4b4] bg-[#c6c6c6] pt-px pl-1.5 font-bold">Label</div>
      <div className="flex flex-1 border-l border-[#b4b4b4]">
        <div className="flex w-[373px] flex-col pl-3">
          <div className="flex h-[33px] items-center pt-[9px] pl-0.5">
            <svg width="10" height="7"><path d="M0 0h10L5 7z" fill="#333" /></svg>
            <span className="ml-2 font-bold">Main Properties</span>
          </div>
          <div className="flex h-[220px] w-[350px] flex-col rounded-t-[2px] border border-[#d2d2d2] bg-[#eaeaea] px-3 pt-3">
            <div className="h-[150px] w-[323px] shrink-0 border border-[#b0b0b0] bg-white" />
            <div className="mt-[10px] flex items-center gap-[5px]">
              <div className="h-[14px] w-[14px] border border-[#b9b9b9] bg-white" />
              <span className="leading-[16px]">Render as HTML</span>
            </div>
          </div>
        </div>
        <div className="flex flex-1 flex-col border-l border-[#b9b9b9] bg-linear-to-r from-[#fbfcfc] to-[#eeeeee]">
          <div className="flex h-[14px] items-center justify-center border-b border-[#c6c6c6] bg-[#f6f7f7]">
            <svg width="8" height="4"><path d="M0 4h8L4 0z" fill="#555" /></svg>
          </div>
        </div>
      </div>
    </div>
  );
}

const MENU = ["Layout", "Edit", "View", "Items", "Add Item", "Atlas", "Settings"];

export default function App() {
  return (
    <div className={`${UI} flex h-[406px] w-[1364px] flex-col overflow-hidden bg-[#eeeeee] text-[13px] leading-[18px] text-[#141414]`}>
      <div className="flex h-[20px] shrink-0 items-start gap-[15px] border-b border-[#d2d2d2] pl-[9px]">
        {MENU.map((m) => (
          <span key={m} className="-mt-px whitespace-nowrap">
            {m === "Atlas" || m === "Settings" ? m : (
              <>
                <span className="underline underline-offset-2">{m[0]}</span>
                {m.slice(1)}
              </>
            )}
          </span>
        ))}
      </div>
      <MainToolbar />
      <ViewToolbar />
      <div className="flex flex-1">
        <SideToolbar />
        <CanvasArea />
        <PropertiesPanel />
      </div>
    </div>
  );
}
